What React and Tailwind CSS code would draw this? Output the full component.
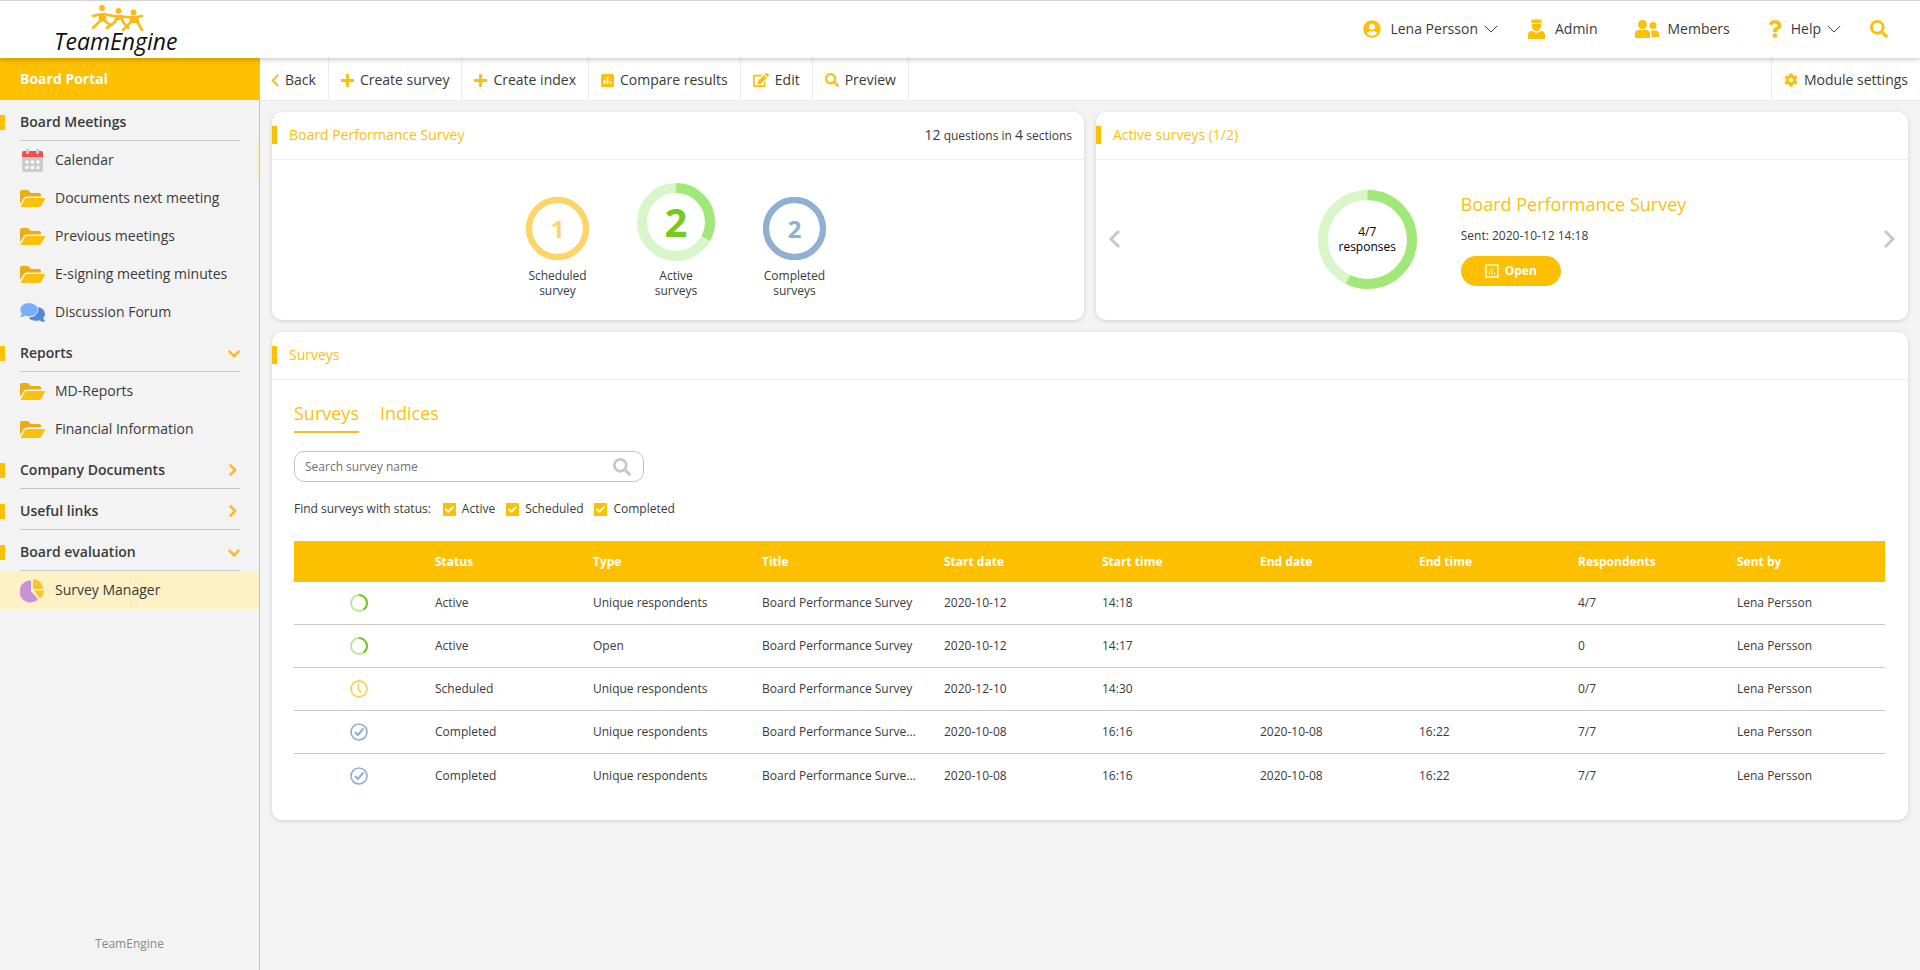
import { useState } from "react";
import { FaSearch, FaEdit, FaCog, FaQuestion, FaUserCircle, FaCheck } from "react-icons/fa";

const menu = [
  {
    title: "Board Meetings",
    items: [
      { label: "Calendar", icon: "calendar", marked: true },
      { label: "Documents next meeting", icon: "folder" },
      { label: "Previous meetings", icon: "folder" },
      { label: "E-signing meeting minutes", icon: "folder" },
      { label: "Discussion Forum", icon: "forum" },
    ],
  },
  {
    title: "Reports",
    open: true,
    items: [
      { label: "MD-Reports", icon: "folder" },
      { label: "Financial Information", icon: "folder" },
    ],
  },
  { title: "Company Documents", open: false, items: [] },
  { title: "Useful links", open: false, items: [] },
  {
    title: "Board evaluation",
    open: true,
    items: [{ label: "Survey Manager", icon: "pie", active: true }],
  },
];

const columns = [
  { key: "status", label: "Status", width: "w-[158px]" },
  { key: "type", label: "Type", width: "w-[169px]" },
  { key: "title", label: "Title", width: "w-[182px]" },
  { key: "startDate", label: "Start date", width: "w-[158px]" },
  { key: "startTime", label: "Start time", width: "w-[158px]" },
  { key: "endDate", label: "End date", width: "w-[159px]" },
  { key: "endTime", label: "End time", width: "w-[159px]" },
  { key: "respondents", label: "Respondents", width: "w-[159px]" },
  { key: "sentBy", label: "Sent by", width: "w-[159px]" },
];

const surveys = [
  { id: 1, status: "Active", type: "Unique respondents", title: "Board Performance Survey", startDate: "2020-10-12", startTime: "14:18", respondents: "4/7", sentBy: "Lena Persson" },
  { id: 2, status: "Active", type: "Open", title: "Board Performance Survey", startDate: "2020-10-12", startTime: "14:17", respondents: "0", sentBy: "Lena Persson" },
  { id: 3, status: "Scheduled", type: "Unique respondents", title: "Board Performance Survey", startDate: "2020-12-10", startTime: "14:30", respondents: "0/7", sentBy: "Lena Persson" },
  { id: 4, status: "Completed", type: "Unique respondents", title: "Board Performance Surve...", startDate: "2020-10-08", startTime: "16:16", endDate: "2020-10-08", endTime: "16:22", respondents: "7/7", sentBy: "Lena Persson" },
  { id: 5, status: "Completed", type: "Unique respondents", title: "Board Performance Surve...", startDate: "2020-10-08", startTime: "16:16", endDate: "2020-10-08", endTime: "16:22", respondents: "7/7", sentBy: "Lena Persson" },
];

function Logo() {
  return (
    <svg viewBox="0 0 130 54" className="w-[130px] h-[54px]" role="img" aria-label="TeamEngine">
      <g fill="#fbba14">
        <circle cx="51" cy="6" r="3" />
        <circle cx="67.500" cy="9" r="2.900" />
        <circle cx="82.500" cy="10.500" r="2.900" />
        <path d="M48 12h7v7l-7 1z" />
        <path d="M64 13h8l-1 5h-6z" />
        <path d="M79 15h8v6h-8z" />
      </g>
      <g fill="none" stroke="#fbba14" strokeWidth="2.600" strokeLinecap="round" strokeLinejoin="round">
        <path d="M42 14 Q50 11 58 13 T74 15 Q84 16 91 14" />
        <path d="M49 13 L49 19 L42 26 M54 13 L54 19 L59 23 L56 26" />
        <path d="M66 14 L64 20 L56 26 M70 14 L72 20 L77 26" />
        <path d="M81 15 L79 21 L72 28 M86 15 L87 21 L91 28" />
      </g>
      <text x="3" y="48" fontFamily="Open Sans, sans-serif" fontStyle="italic" fontSize="23" fill="#111">TeamEngine</text>
    </svg>
  );
}

function MenuIcon({ name }) {
  if (name === "calendar") {
    return (
      <svg viewBox="0 0 25 25" className="w-[25px] h-[25px]">
        <path d="M2 9h21v13a2 2 0 0 1-2 2H4a2 2 0 0 1-2-2z" fill="#ccc" />
        <path d="M2 9V5a2 2 0 0 1 2-2h17a2 2 0 0 1 2 2v4z" fill="#f44f4f" />
        <path d="M6 1h3v3.500a1.500 1.500 0 0 1-3 0zM16 1h3v3.500a1.500 1.500 0 0 1-3 0z" fill="#ccc" />
        <g fill="#fff">
          <circle cx="7" cy="14" r="1.700" /><circle cx="12.500" cy="14" r="1.700" /><circle cx="18" cy="14" r="1.700" />
          <circle cx="7" cy="19.500" r="1.700" /><circle cx="12.500" cy="19.500" r="1.700" /><circle cx="18" cy="19.500" r="1.700" />
        </g>
      </svg>
    );
  }
  if (name === "forum") {
    return (
      <svg viewBox="0 0 576 512" className="w-[25px] h-[25px]">
        <path fill="#5887d6" d="M532 386c27-27 44-61 44-98 0-80-76-146-174-158 9 18 14 38 14 62 0 98-97 176-216 180 31 48 95 76 168 76 29 0 57-5 82-14 31 22 69 36 114 36 6 0 10-3 13-8 2-6 1-12-3-16-1 0-25-26-42-60z" />
        <path fill="#7aaefc" stroke="#f3f3f3" strokeWidth="16" d="M416 192c0-88-93-160-208-160S0 104 0 192c0 34 14 66 38 92-14 32-35 58-35 59-3 4-4 10-2 16s7 9 13 9c41 0 75-15 99-30 29 9 61 14 95 14 115 0 208-72 208-160z" />
      </svg>
    );
  }
  if (name === "pie") {
    return (
      <svg viewBox="0 0 25 25" className="w-[25px] h-[25px]">
        <path fill="#c792d6" d="M11 2.500V13l7 8.500A11 11 0 1 1 11 2.500z" />
        <path fill="#fbc62d" d="M13 1a11 11 0 0 1 10.500 10H13z" />
        <path fill="#fbc62d" d="M14 12.500h10a10 10 0 0 1-4 8z" />
      </svg>
    );
  }
  return (
    <svg viewBox="0 0 25 17" className="w-[25px] h-[17px]">
      <path fill="#e9ae15" d="M0 14V2a2 2 0 0 1 2-2h6l3 3h8a2 2 0 0 1 2 2v1.500H7a4 4 0 0 0-3.500 2z" />
      <path fill="#fbc108" d="M1 16 5 9a2.500 2.500 0 0 1 2-1h17a1 1 0 0 1 .800 1.500L21 16a2 2 0 0 1-1.700 1H1.500a.6.600 0 0 1-.500-1z" />
    </svg>
  );
}

function Chevron({ dir, className }) {
  const shapes = {
    down: { box: "0 0 18 10", d: "M1 1l8 8 8-8" },
    right: { box: "0 0 10 18", d: "M1 1l8 8-8 8" },
    left: { box: "0 0 10 18", d: "M9 1L1 9l8 8" },
  };
  return (
    <svg viewBox={shapes[dir].box} className={`overflow-visible ${className}`} fill="none" stroke="currentColor" aria-hidden="true">
      <path d={shapes[dir].d} vectorEffect="non-scaling-stroke" />
    </svg>
  );
}

function AdminIcon() {
  return (
    <svg viewBox="0 0 17 20" className="w-[17px] h-5" fill="#fbbf0c">
      <path d="M3.500 0l2 1 3-1 3 1 2-1v4h-10z" />
      <path d="M4 5h9v2.500a4.500 4.500 0 0 1-9 0z" />
      <path d="M0 20v-4a4 4 0 0 1 4-4l4.500 2 4.500-2a4 4 0 0 1 4 4v4z" />
    </svg>
  );
}

function MembersIcon() {
  return (
    <svg viewBox="0 0 24 18" className="w-6 h-[18px]" fill="#fbbf0c">
      <circle cx="7.500" cy="4.500" r="4.500" />
      <path d="M0 17v-3a4 4 0 0 1 4-4h7a4 4 0 0 1 4 4v3a1 1 0 0 1-1 1H1a1 1 0 0 1-1-1z" />
      <circle cx="18" cy="5.500" r="3.500" />
      <path d="M16.500 17v-3a5 5 0 0 0-1.500-3.500h5a4 4 0 0 1 4 4V16a1 1 0 0 1-1 1z" />
    </svg>
  );
}

function PlusIcon() {
  return (
    <svg viewBox="0 0 13 13" className="w-[13px] h-[13px]" stroke="#fbbf0c" strokeWidth="2.800">
      <path d="M6.500 0v13M0 6.500h13" />
    </svg>
  );
}

function ChartIcon() {
  return (
    <svg viewBox="0 0 13 13" className="w-[13px] h-[13px]">
      <rect width="13" height="13" rx="1.500" fill="#fbbf0c" />
      <path d="M3.500 10V6M6.500 10V3M9.500 10V7.500" stroke="#fff" strokeWidth="1.600" />
    </svg>
  );
}

function Ring({ size, stroke, value, color, track, className, children }) {
  const r = (size - stroke) / 2;
  const c = 2 * Math.PI * r;
  return (
    <div className={`grid place-items-center ${className}`}>
      <svg viewBox={`0 0 ${size} ${size}`} className="col-start-1 row-start-1 w-full h-full -rotate-90" fill="none" strokeWidth={stroke}>
        <circle cx={size / 2} cy={size / 2} r={r} stroke={track} />
        <circle cx={size / 2} cy={size / 2} r={r} stroke={color} strokeDasharray={`${c * value} ${c}`} />
      </svg>
      <div className="col-start-1 row-start-1 text-center">{children}</div>
    </div>
  );
}

function StatusIcon({ status }) {
  if (status === "Active") {
    return <Ring size={18} stroke={2} value={0.4} color="#78c41f" track="#b9e89a" className="w-[18px] h-[18px] mx-auto" />;
  }
  if (status === "Scheduled") {
    return (
      <svg viewBox="0 0 18 18" className="w-[18px] h-[18px] mx-auto" fill="none" stroke="#fbd25f" strokeWidth="1.800" strokeLinecap="round">
        <circle cx="9" cy="9" r="8" />
        <path d="M8.500 4.500V9l2 3" />
      </svg>
    );
  }
  return (
    <svg viewBox="0 0 18 18" className="w-[18px] h-[18px] mx-auto" fill="none" stroke="#8fafd3" strokeWidth="1.600" strokeLinecap="round">
      <circle cx="9" cy="9" r="8" />
      <path d="M5.500 9.500l2.500 2.500 5-6" strokeWidth="2" />
    </svg>
  );
}

function Card({ title, extra, className, children }) {
  return (
    <section className={`bg-white rounded-[10px] shadow-[0_1px_4px_rgba(0,0,0,0.15)] ${className || ""}`}>
      <div className="flex items-center h-12 pr-3 pb-[2px] border-b border-[#efefef]">
        <span className="w-[5px] h-[18px] bg-[#fcc000]" />
        <h2 className="ml-3 text-sm font-medium text-[#fbbf0c]">{title}</h2>
        {extra && <span className="ml-auto text-xs">{extra}</span>}
      </div>
      {children}
    </section>
  );
}

function ToolButton({ icon, label, className }) {
  return (
    <button type="button" className={`flex items-center gap-[6px] h-full pt-[2px] border-[#ececec] text-sm ${className}`}>
      {icon}
      {label}
    </button>
  );
}

export default function App() {
  const [search, setSearch] = useState("");
  const [tab, setTab] = useState("Surveys");
  const [filters, setFilters] = useState({ Active: true, Scheduled: true, Completed: true });

  const rows = surveys.filter(
    (s) => filters[s.status] && s.title.toLowerCase().includes(search.toLowerCase())
  );

  return (
    <div className="min-h-screen flex flex-col bg-[#f3f3f3] text-[#3a3a3a] font-['Open_Sans',sans-serif]">
      <header className="relative z-10 flex items-center h-[58px] pb-[2px] bg-white border-t border-[#d5d5d5] shadow-[0_2px_5px_rgba(0,0,0,0.2)]">
        <a href="#home" className="ml-[51px]"><Logo /></a>
        <nav className="ml-auto mr-8 flex items-center text-sm">
          <button type="button" className="flex items-center">
            <FaUserCircle className="text-[#fbbf0c] text-lg mr-[9px]" />
            Lena Persson
            <Chevron dir="down" className="w-[14px] h-2 ml-[6px]" />
          </button>
          <a href="#admin" className="flex items-center gap-[10px] ml-[30px]"><AdminIcon />Admin</a>
          <a href="#members" className="flex items-center gap-2 ml-[38px]"><MembersIcon />Members</a>
          <button type="button" className="flex items-center ml-9">
            <FaQuestion className="text-[#fbbf0c] text-lg mr-[7px]" />
            Help
            <Chevron dir="down" className="w-[14px] h-2 ml-[6px]" />
          </button>
          <button type="button" aria-label="Search" className="ml-[29px]"><FaSearch className="text-[#fbbf0c] text-lg" /></button>
        </nav>
      </header>

      <div className="flex flex-1">
        <aside className="w-[260px] shrink-0 flex flex-col border-r border-[#c4c4c4]">
          <h1 className="flex items-center h-[42px] pl-5 bg-[#fcc000] text-white text-sm font-bold">Board Portal</h1>
          {menu.map((group) => (
            <div key={group.title}>
              <div className="flex items-center h-[41px] pt-1">
                <span className="w-[5px] h-[15px] bg-[#fcc000]" />
                <button type="button" className="flex flex-1 items-center justify-between h-full ml-[15px] mr-[19px] border-b border-[#c8c8c8] text-sm font-semibold">
                  {group.title}
                  {group.open === true && <Chevron dir="down" className="w-3 h-[7px] text-[#fbb829] stroke-[2.5px]" />}
                  {group.open === false && <Chevron dir="right" className="w-[7px] h-3 mr-1 text-[#fbb829] stroke-[2.5px]" />}
                </button>
              </div>
              {group.items.map((item) => (
                <a
                  key={item.label}
                  href="#module"
                  className={`flex items-center h-[38px] pl-5 text-sm ${item.active ? "bg-[#fef1c5]" : ""} ${item.marked ? "border-r-2 border-[#fdf0bf]" : ""}`}
                >
                  <MenuIcon name={item.icon} />
                  <span className="ml-[10px]">{item.label}</span>
                </a>
              ))}
            </div>
          ))}
          <p className="mt-auto mb-[18px] text-center text-xs text-[#888]">TeamEngine</p>
        </aside>

        <main className="flex-1 min-w-0">
          <div className="flex items-center h-[43px] bg-white border-b border-[#ececec]">
            <ToolButton className="px-3 border-r" label="Back" icon={<Chevron dir="left" className="w-[7px] h-[13px] text-[#fbbf0c] stroke-2" />} />
            <ToolButton className="px-3 border-r" label="Create survey" icon={<PlusIcon />} />
            <ToolButton className="px-3 border-r" label="Create index" icon={<PlusIcon />} />
            <ToolButton className="px-3 border-r" label="Compare results" icon={<ChartIcon />} />
            <ToolButton className="px-3 border-r" label="Edit" icon={<FaEdit className="text-[#fbbf0c] text-base" />} />
            <ToolButton className="px-3 border-r" label="Preview" icon={<FaSearch className="text-[#fbbf0c]" />} />
            <ToolButton className="ml-auto px-3 border-l" label="Module settings" icon={<FaCog className="text-[#fbbf0c]" />} />
          </div>

          <div className="grid grid-cols-2 gap-3 px-3 pt-[11px]">
            <Card
              title="Board Performance Survey"
              extra={<><span className="text-sm">12</span> questions in <span className="text-sm">4</span> sections</>}
            >
              <div className="flex justify-center items-end gap-12 h-40 pr-1 pb-[22px] text-xs leading-[15px] text-center">
                <div className="w-[63px] flex flex-col items-center">
                  <Ring size={63} stroke={6} value={1} color="#fdd466" track="#fdd466" className="w-[63px] h-[63px]">
                    <span className="text-2xl font-bold text-[#fdd466]">1</span>
                  </Ring>
                  <p className="mt-2">Scheduled survey</p>
                </div>
                <div className="w-[78px] flex flex-col items-center">
                  <Ring size={78} stroke={10} value={0.33} color="#a0e878" track="#d9f6cb" className="w-[78px] h-[78px]">
                    <span className="text-[40px] leading-none font-bold text-[#78c81e]">2</span>
                  </Ring>
                  <p className="mt-[7px]">Active<br />surveys</p>
                </div>
                <div className="w-[63px] flex flex-col items-center">
                  <Ring size={63} stroke={6} value={1} color="#8fafd3" track="#8fafd3" className="w-[63px] h-[63px]">
                    <span className="text-2xl font-bold text-[#8fafd3]">2</span>
                  </Ring>
                  <p className="mt-2">Completed surveys</p>
                </div>
              </div>
            </Card>

            <Card title="Active surveys (1/2)">
              <div className="flex items-center justify-between h-40 px-[14px] pb-[2px]">
                <button type="button" aria-label="Previous survey"><Chevron dir="left" className="w-[10px] h-[18px] text-[#c8c8c8] stroke-3" /></button>
                <div className="flex items-center gap-11">
                  <Ring size={99} stroke={10} value={0.5714} color="#a0e878" track="#d9f6cb" className="w-[99px] h-[99px]">
                    <p className="text-xs leading-[15px] text-black">4/7<br />responses</p>
                  </Ring>
                  <div>
                    <h3 className="text-lg font-medium leading-6 text-[#fbbf0c]">Board Performance Survey</h3>
                    <p className="mt-3 text-xs">Sent: 2020-10-12 14:18</p>
                    <button type="button" className="mt-3 flex items-center justify-center gap-[6px] w-[100px] h-[30px] rounded-full bg-[#fcc000] text-white text-xs font-bold">
                      <svg viewBox="0 0 14 14" className="w-[14px] h-[14px]" fill="none" stroke="#fff">
                        <rect x="1" y="1" width="12" height="12" strokeWidth="1.300" />
                        <path d="M4.500 10.500v-4M7 10.500v-6M9.500 10.500v-2" />
                      </svg>
                      Open
                    </button>
                  </div>
                </div>
                <button type="button" aria-label="Next survey"><Chevron dir="right" className="w-[10px] h-[18px] text-[#c8c8c8] stroke-3" /></button>
              </div>
            </Card>

            <Card title="Surveys" className="col-span-2">
              <div className="pl-[22px] pr-[23px] pt-[19px] pb-[23px]">
                <div className="flex gap-[21px] text-lg text-[#fbbf0c] font-medium">
                  {["Surveys", "Indices"].map((t) => (
                    <button
                      key={t}
                      type="button"
                      onClick={() => setTab(t)}
                      className={`h-[34px] pb-1 border-b-2 ${tab === t ? "border-[#ecc020]" : "border-transparent"}`}
                    >
                      {t}
                    </button>
                  ))}
                </div>

                <div className="mt-[18px] flex items-center w-[350px] h-[31px] pl-[10px] pr-3 border border-[#c4c4c4] rounded-[10px]">
                  <input
                    type="text"
                    aria-label="Search survey name"
                    placeholder="Search survey name"
                    value={search}
                    onChange={(e) => setSearch(e.target.value)}
                    className="flex-1 text-xs outline-none placeholder:text-[#707070]"
                  />
                  <FaSearch className="text-lg text-[#c8c8c8]" />
                </div>

                <div className="mt-[18px] flex items-center h-[18px] text-xs">
                  <span className="mr-3">Find surveys with status:</span>
                  {Object.keys(filters).map((name) => (
                    <label key={name} className="mr-[11px] flex items-center gap-[6px]">
                      <span className="grid w-[13px] h-[13px]">
                        <input
                          type="checkbox"
                          checked={filters[name]}
                          onChange={() => setFilters({ ...filters, [name]: !filters[name] })}
                          className="peer col-start-1 row-start-1 appearance-none w-[13px] h-[13px] border border-[#fcc000] checked:bg-[#fcc000]"
                        />
                        <FaCheck className="pointer-events-none col-start-1 row-start-1 place-self-center text-[9px] text-white" />
                      </span>
                      {name}
                    </label>
                  ))}
                </div>

                <table className="mt-[23px] w-full table-fixed border-separate border-spacing-0 text-xs text-left">
                  <thead>
                    <tr className="h-[41px] bg-[#fcc000] text-white">
                      <th className="w-[130px]" aria-label="Icon" />
                      {columns.map((col) => (
                        <th key={col.key} className={`${col.width} px-[11px] font-bold`}>{col.label}</th>
                      ))}
                    </tr>
                  </thead>
                  <tbody>
                    {rows.map((row) => (
                      <tr key={row.id} className="group h-[43px]">
                        <td className="border-b border-[#c8c8c8] group-last:border-b-0"><StatusIcon status={row.status} /></td>
                        {columns.map((col) => (
                          <td key={col.key} className="px-[11px] whitespace-nowrap border-b border-[#c8c8c8] group-last:border-b-0">{row[col.key]}</td>
                        ))}
                      </tr>
                    ))}
                  </tbody>
                </table>
              </div>
            </Card>
          </div>
        </main>
      </div>
    </div>
  );
}
